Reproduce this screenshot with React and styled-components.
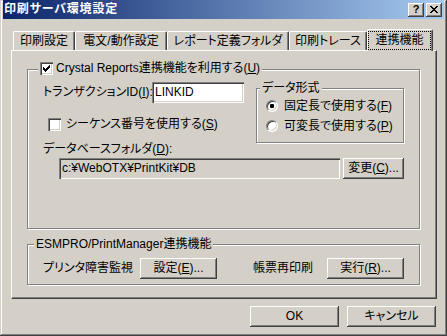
import React from "react";
import styled, { createGlobalStyle } from "styled-components";

// Win2k-ish palette
const FACE = "#d4d0c8";
const SHADOW = "#808080";
const DARK = "#404040";

const GlobalStyle = createGlobalStyle`
  html, body {
    margin: 0;
    padding: 0;
    background: ${FACE};
  }
  body {
    font-family: "Liberation Sans", "Noto Sans CJK JP", sans-serif;
    font-size: 12px;
    color: #000;
    font-feature-settings: "palt" 1;
  }
  * { box-sizing: border-box; }
`;

const Window = styled.div`
  width: 447px;
  height: 336px;
  background: ${FACE};
  padding: 0 3px 3px 3px;
  display: flex;
  flex-direction: column;
  box-shadow: inset -1px -1px ${DARK}, inset 1px 1px ${FACE},
    inset -2px -2px ${SHADOW}, inset 2px 2px #fff;
`;

const TitleBar = styled.div`
  height: 19px;
  display: flex;
  align-items: center;
  padding: 0 2px 0 1px;
  background: linear-gradient(to right, #0a246a, #a6caf0);
  color: #fff;
  font-weight: bold;
  font-size: 12px;
  line-height: 13px;
`;

const TitleText = styled.div`
  flex: 1;
  white-space: nowrap;
  letter-spacing: 0.8px;
`;

const CaptionButton = styled.div`
  width: 16px;
  height: 14px;
  margin-left: ${(p) => p.$gap || 0}px;
  background: ${FACE};
  display: flex;
  align-items: center;
  justify-content: center;
  color: #000;
  font-family: "Liberation Sans", Arial, sans-serif;
  font-weight: bold;
  font-size: 11px;
  line-height: 11px;
  box-shadow: inset -1px -1px ${DARK}, inset 1px 1px #fff,
    inset -2px -2px ${SHADOW}, inset 2px 2px ${FACE};
`;

const TabRow = styled.div`
  height: 21px;
  margin-top: 10px;
  padding-left: 10px;
  display: flex;
  align-items: flex-end;
`;

const Tab = styled.div`
  width: ${(p) => p.$w}px;
  height: ${(p) => (p.$active ? 22 : 19)}px;
  margin-bottom: ${(p) => (p.$active ? -1 : 0)}px;
  position: relative;
  z-index: ${(p) => (p.$active ? 2 : 1)};
  background: ${FACE};
  border-top: 1px solid #fff;
  border-left: 1px solid #fff;
  border-right: 1px solid ${DARK};
  border-radius: 2px 2px 0 0;
  box-shadow: inset -1px 0 ${SHADOW};
  display: flex;
  align-items: ${(p) => (p.$active ? "flex-start" : "center")};
  justify-content: center;
  white-space: nowrap;
  line-height: 13px;
  padding: ${(p) => (p.$active ? "1px 1px 0 0" : "0")};
`;

const FocusRect = styled.div`
  width: 100%;
  height: 19px;
  border: 1px dotted #000;
  display: flex;
  align-items: center;
  justify-content: center;
`;

const Panel = styled.div`
  width: 426px;
  height: 249px;
  margin-left: 8px;
  border-top: 1px solid #fff;
  border-left: 1px solid #fff;
  border-right: 1px solid ${DARK};
  border-bottom: 1px solid ${DARK};
  box-shadow: inset -1px -1px ${SHADOW};
  padding: 18px 16px 12px 15px;
  display: flex;
  flex-direction: column;
`;

const Group = styled.div`
  height: ${(p) => p.$h}px;
  width: ${(p) => (p.$w ? `${p.$w}px` : "auto")};
  margin-top: ${(p) => p.$mt || 0}px;
  margin-left: ${(p) => p.$ml || 0}px;
  border: 1px solid ${SHADOW};
  box-shadow: 1px 1px 0 #fff, inset 1px 1px 0 #fff;
  display: flex;
  flex-direction: column;
  flex-shrink: 0;
`;

const Legend = styled.div`
  align-self: flex-start;
  height: 13px;
  margin: ${(p) => p.$mt}px 0 0 ${(p) => p.$ml}px;
  padding: 0 2px;
  background: ${FACE};
  display: flex;
  align-items: center;
  gap: ${(p) => p.$gap || 0}px;
  white-space: nowrap;
  line-height: 13px;
`;

const Body = styled.div`
  padding-left: 15px;
  display: flex;
  flex-direction: column;
`;

const TopRow = styled.div`
  margin-top: 7px;
  display: flex;
  align-items: flex-start;
`;

const LeftCol = styled.div`
  width: 201px;
  display: flex;
  flex-direction: column;
`;

const Row = styled.div`
  height: ${(p) => p.$h || 21}px;
  margin-top: ${(p) => p.$mt || 0}px;
  margin-left: ${(p) => p.$ml || 0}px;
  display: flex;
  align-items: center;
  gap: ${(p) => p.$gap || 0}px;
  white-space: nowrap;
  line-height: 13px;
`;

const Label = styled.div`
  width: ${(p) => (p.$w ? `${p.$w}px` : "auto")};
  margin-left: ${(p) => p.$ml || 0}px;
  flex-shrink: 0;
  white-space: nowrap;
  line-height: 13px;
`;

const Field = styled.div`
  width: ${(p) => p.$w}px;
  height: 21px;
  margin-left: ${(p) => p.$ml || 0}px;
  background: ${(p) => (p.$readonly ? FACE : "#fff")};
  box-shadow: inset 1px 1px ${SHADOW}, inset 2px 2px ${DARK},
    inset -1px -1px #fff, inset -2px -2px ${FACE};
  padding: 0 3px;
  display: flex;
  align-items: center;
  white-space: nowrap;
  overflow: hidden;
  line-height: 13px;
`;

const Button = styled.div`
  width: ${(p) => p.$w}px;
  height: 21px;
  margin-left: ${(p) => p.$ml || 0}px;
  flex-shrink: 0;
  background: ${FACE};
  box-shadow: inset -1px -1px ${DARK}, inset 1px 1px #fff,
    inset -2px -2px ${SHADOW}, inset 2px 2px ${FACE};
  display: flex;
  align-items: center;
  justify-content: center;
  white-space: nowrap;
  line-height: 13px;
`;

const CheckBox = styled.span`
  width: 13px;
  height: 13px;
  flex-shrink: 0;
  padding: 3px;
  background: #fff;
  display: inline-flex;
  box-shadow: inset 1px 1px ${SHADOW}, inset 2px 2px ${DARK},
    inset -1px -1px #fff, inset -2px -2px ${FACE};
`;

const Radio = styled.span`
  width: 12px;
  height: 12px;
  flex-shrink: 0;
  border-radius: 50%;
  background: #fff;
  border: 1px solid;
  border-color: ${SHADOW} #fff #fff ${SHADOW};
  box-shadow: inset 1px 1px ${DARK}, inset -1px -1px ${FACE};
  display: inline-flex;
  align-items: center;
  justify-content: center;

  &::after {
    content: "";
    width: 4px;
    height: 4px;
    border-radius: 1px;
    background: ${(p) => (p.$on ? "#000" : "transparent")};
  }
`;

const ButtonBar = styled.div`
  margin-top: 7px;
  width: 426px;
  margin-left: 8px;
  padding-right: 1px;
  display: flex;
  justify-content: flex-end;
  gap: 8px;
`;

function Check() {
  return (
    <svg width="7" height="7" viewBox="0 0 7 7" shapeRendering="crispEdges">
      <path
        d="M6 0h1v1H6z M5 1h2v1H5z M0 2h1v1H0z M4 2h3v1H4z M0 3h2v1H0z M3 3h3v1H3z M0 4h5v1H0z M1 5h3v1H1z M2 6h1v1H2z"
        fill="#000"
      />
    </svg>
  );
}

function CloseGlyph() {
  return (
    <svg width="8" height="7" viewBox="0 0 8 7" shapeRendering="crispEdges">
      <path
        d="M0 0h2v1H0z M6 0h2v1H6z M1 1h2v1H1z M5 1h2v1H5z M2 2h4v1H2z M3 3h2v1H3z M2 4h4v1H2z M1 5h2v1H1z M5 5h2v1H5z M0 6h2v1H0z M6 6h2v1H6z"
        fill="#000"
      />
    </svg>
  );
}

const tabs = [
  { label: "印刷設定", w: 62 },
  { label: "電文/動作設定", w: 92 },
  { label: "レポート定義フォルダ", w: 122 },
  { label: "印刷トレース", w: 78 },
  { label: "連携機能", w: 66, active: true },
];

export default function App() {
  return (
    <>
      <GlobalStyle />
      <Window>
        <TitleBar>
          <TitleText>印刷サーバ環境設定</TitleText>
          <CaptionButton>?</CaptionButton>
          <CaptionButton $gap={2}>
            <CloseGlyph />
          </CaptionButton>
        </TitleBar>

        <TabRow>
          {tabs.map((t) => (
            <Tab key={t.label} $w={t.w} $active={t.active}>
              {t.active ? <FocusRect>{t.label}</FocusRect> : t.label}
            </Tab>
          ))}
        </TabRow>

        <Panel>
          <Group $h={160}>
            <Legend $mt={-8} $ml={10} $gap={3}>
              <CheckBox>
                <Check />
              </CheckBox>
              <span>
                Crystal Reports連携機能を利用する(<u>U</u>)
              </span>
            </Legend>
            <Body>
              <TopRow>
                <LeftCol>
                  <Row>
                    <Label $w={109}>
                      トランザクションID(<u>I</u>):
                    </Label>
                    <Field $w={92}>LINKID</Field>
                  </Row>
                  <Row $h={13} $mt={15} $ml={5} $gap={5}>
                    <CheckBox />
                    <span>
                      シーケンス番号を使用する(<u>S</u>)
                    </span>
                  </Row>
                </LeftCol>
                <Group $h={55} $w={148} $mt={6} $ml={12}>
                  <Legend $mt={-7} $ml={3}>
                    データ形式
                  </Legend>
                  <Row $h={14} $mt={4} $ml={9} $gap={6}>
                    <Radio $on />
                    <span>
                      固定長で使用する(<u>F</u>)
                    </span>
                  </Row>
                  <Row $h={14} $mt={6} $ml={9} $gap={6}>
                    <Radio />
                    <span>
                      可変長で使用する(<u>P</u>)
                    </span>
                  </Row>
                </Group>
              </TopRow>
              <Label>
                データベースフォルダ(<u>D</u>):
              </Label>
              <Row $mt={2}>
                <Field $w={281} $ml={16} $readonly>
                  c:¥WebOTX¥PrintKit¥DB
                </Field>
                <Button $w={61} $ml={3}>
                  変更(<u>C</u>)...
                </Button>
              </Row>
            </Body>
          </Group>

          <Group $h={41} $mt={15}>
            <Legend $mt={-7} $ml={6}>
              ESMPRO/PrintManager連携機能
            </Legend>
            <Body>
              <Row $mt={7}>
                <Label $w={97}>プリンタ障害監視</Label>
                <Button $w={77}>
                  設定(<u>E</u>)...
                </Button>
                <Label $w={74} $ml={36}>
                  帳票再印刷
                </Label>
                <Button $w={77}>
                  実行(<u>R</u>)...
                </Button>
              </Row>
            </Body>
          </Group>
        </Panel>

        <ButtonBar>
          <Button $w={89}>OK</Button>
          <Button $w={89}>キャンセル</Button>
        </ButtonBar>
      </Window>
    </>
  );
}
